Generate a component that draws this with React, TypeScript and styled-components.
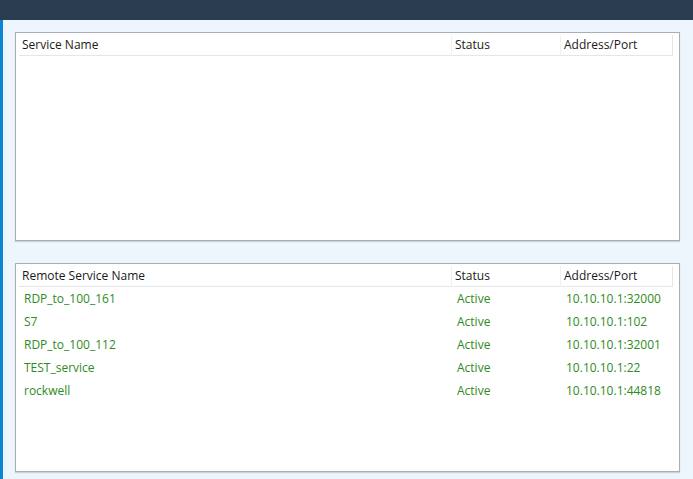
import React from "react";
import styled, { createGlobalStyle } from "styled-components";

const GlobalStyle = createGlobalStyle`
  body {
    margin: 0;
    font-family: "Open Sans", "Noto Sans", sans-serif;
    font-size: 12px;
    background: #ffffff;
  }
`;

const Window = styled.div`
  width: 693px;
  height: 479px;
  display: flex;
  flex-direction: column;
  overflow: hidden;
`;

const TitleBar = styled.div`
  height: 20px;
  background: #2b3d51;
  flex-shrink: 0;
`;

const Body = styled.div`
  flex: 1;
  background: #eef6fd;
  border-left: 3px solid #0a86d4;
  border-right: 3px solid #eef6fd;
  padding: 12px 10px 12px 12px;
  display: flex;
  flex-direction: column;
  gap: 22px;
`;

const Panel = styled.div`
  height: 205px;
  background: #fff;
  border: 1px solid #a8aeb6;
  box-shadow: 0 1px 1px rgba(0, 0, 0, 0.15);
  padding: 2px 3px 0 3px;
`;

const Grid = styled.div`
  display: grid;
  grid-template-columns: 433px 109px 112px;
`;

const HeaderCell = styled.div<{ $last?: boolean }>`
  height: 20px;
  line-height: 20px;
  padding-left: 3px;
  color: #1a1a1a;
  border-bottom: 1px solid #e3e6ea;
  border-right: 1px solid ${({ $last }) => ($last ? "#e3e6ea" : "#f0f0f0")};
  white-space: nowrap;
`;

const Cell = styled.div<{ $indent?: number }>`
  height: 23px;
  line-height: 23px;
  padding-left: ${({ $indent }) => $indent ?? 5}px;
  color: #2e8b22;
  white-space: nowrap;
`;

const remote = [
  ["RDP_to_100_161", "Active", "10.10.10.1:32000"],
  ["S7", "Active", "10.10.10.1:102"],
  ["RDP_to_100_112", "Active", "10.10.10.1:32001"],
  ["TEST_service", "Active", "10.10.10.1:22"],
  ["rockwell", "Active", "10.10.10.1:44818"],
];

const Header = ({ first }: { first: string }) => (
  <>
    <HeaderCell>{first}</HeaderCell>
    <HeaderCell>Status</HeaderCell>
    <HeaderCell $last>Address/Port</HeaderCell>
  </>
);

export default function App() {
  return (
    <Window>
      <GlobalStyle />
      <TitleBar />
      <Body>
        <Panel>
          <Grid>
            <Header first="Service Name" />
          </Grid>
        </Panel>
        <Panel>
          <Grid>
            <Header first="Remote Service Name" />
            {remote.map((r) => (
              <React.Fragment key={r[0]}>
                <Cell>{r[0]}</Cell>
                <Cell>{r[1]}</Cell>
                <Cell>{r[2]}</Cell>
              </React.Fragment>
            ))}
          </Grid>
        </Panel>
      </Body>
    </Window>
  );
}
